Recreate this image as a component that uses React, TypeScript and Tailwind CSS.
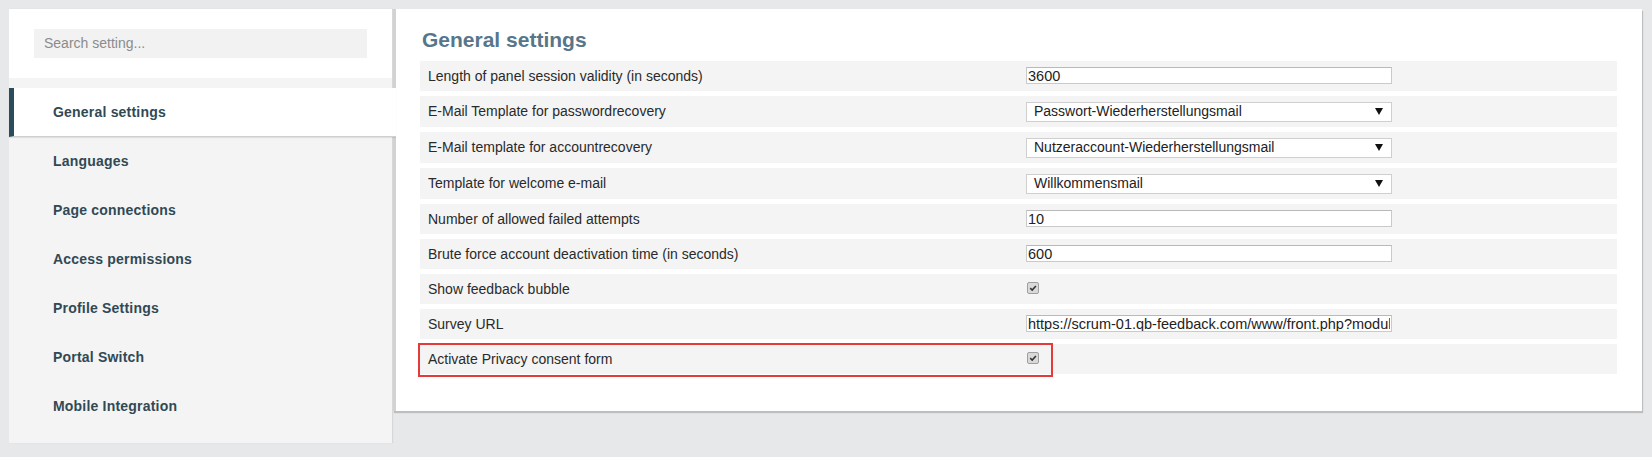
import React from 'react';

type Row =
  | { label: string; kind: 'text'; value: string }
  | { label: string; kind: 'select'; value: string }
  | { label: string; kind: 'check'; marked?: boolean };

const menu = [
  'General settings',
  'Languages',
  'Page connections',
  'Access permissions',
  'Profile Settings',
  'Portal Switch',
  'Mobile Integration',
];

const rows: Row[] = [
  { label: 'Length of panel session validity (in seconds)', kind: 'text', value: '3600' },
  { label: 'E-Mail Template for passwordrecovery', kind: 'select', value: 'Passwort-Wiederherstellungsmail' },
  { label: 'E-Mail template for accountrecovery', kind: 'select', value: 'Nutzeraccount-Wiederherstellungsmail' },
  { label: 'Template for welcome e-mail', kind: 'select', value: 'Willkommensmail' },
  { label: 'Number of allowed failed attempts', kind: 'text', value: '10' },
  { label: 'Brute force account deactivation time (in seconds)', kind: 'text', value: '600' },
  { label: 'Show feedback bubble', kind: 'check' },
  { label: 'Survey URL', kind: 'text', value: 'https://scrum-01.qb-feedback.com/www/front.php?module=survey&id=1' },
  { label: 'Activate Privacy consent form', kind: 'check', marked: true },
];

const Checkbox = () => (
  <span className="ml-[1px] -mt-[3px] flex h-[12px] w-[12px] items-center justify-center rounded-[2px] border border-[#9f9f9f] bg-[#d9d9d9]">
    <svg viewBox="0 0 10 10" className="h-[8px] w-[8px]">
      <path d="M1.5 5.2 L4 7.6 L8.6 2.4" fill="none" stroke="#333" strokeWidth="1.9" />
    </svg>
  </span>
);

const Field = ({ row }: { row: Row }) => {
  if (row.kind === 'check') return <Checkbox />;
  if (row.kind === 'select') {
    return (
      <div className="flex h-[20px] w-[366px] items-center justify-between border border-[#cfcfcf] bg-white pl-[7px] pr-[8px] text-[14px] text-[#222]">
        <span>{row.value}</span>
        <svg viewBox="0 0 8 7" className="h-[7px] w-[8px]">
          <path d="M0 0 H8 L4 7 Z" fill="#111" />
        </svg>
      </div>
    );
  }
  return (
    <input
      readOnly
      value={row.value}
      className="-mt-[1px] h-[17px] w-[366px] border border-[#cacaca] border-t-[#b9b9b9] bg-white px-[1px] text-[14.5px] leading-[15px] text-[#222] outline-none"
    />
  );
};

export default function App() {
  return (
    <div className="flex min-h-screen w-full items-start bg-[#e7e8e9] pb-[14px] pl-[9px] pr-[10px] pt-[9px] font-['Liberation_Sans',Arial,sans-serif]">
      {/* Sidebar */}
      <aside className="w-[383px] shrink-0 bg-[#f4f4f4] pb-[12px] shadow-[1px_0_1px_rgba(0,0,0,0.07)]">
        <div className="bg-white px-[25px] py-[20px]">
          <div className="flex h-[29px] items-center bg-[#f2f2f2] px-[10px] text-[14px] text-[#8b8b8b]">
            Search setting...
          </div>
        </div>
        <nav className="pt-[10px]">
          {menu.map((item, i) =>
            i === 0 ? (
              <div
                key={item}
                className="relative z-10 -mr-[4px] flex h-[49px] items-center border-b border-l-[5px] border-b-[#cfcfcf] border-l-[#2b4c5a] bg-white pl-[39px] text-[14px] font-bold tracking-[0.2px] text-[#304955] shadow-[0_1px_1px_rgba(0,0,0,0.08)]"
              >
                {item}
              </div>
            ) : (
              <div
                key={item}
                className="flex h-[49px] items-center pl-[44px] text-[14px] font-bold tracking-[0.2px] text-[#304955]"
              >
                {item}
              </div>
            ),
          )}
        </nav>
      </aside>

      {/* Main panel */}
      <main className="ml-[1px] flex-1 border-l-[3px] border-[#d2d2d2] bg-white pb-[37px] pl-[24px] pr-[25px] pt-[19px] shadow-[1px_2px_1px_rgba(0,0,0,0.18)]">
        <h1 className="mb-[9px] pl-[2px] text-[21px] font-bold leading-[24px] text-[#58768a]">General settings</h1>
        <div className="flex flex-col gap-[5px]">
          {rows.map((row) => (
            <div
              key={row.label}
              className={`relative flex items-center bg-[#f4f4f4] pl-[8px] ${row.kind === 'select' ? 'h-[31px]' : 'h-[30px]'}`}
            >
              <div className="w-[598px] shrink-0 text-[14px] text-[#2a2a2a]">{row.label}</div>
              <Field row={row} />
              {row.kind === 'check' && row.marked && (
                <div className="pointer-events-none absolute -left-[2px] -top-[1px] h-[34px] w-[635px] border-2 border-[#e53a3a]" />
              )}
            </div>
          ))}
        </div>
      </main>
    </div>
  );
}
